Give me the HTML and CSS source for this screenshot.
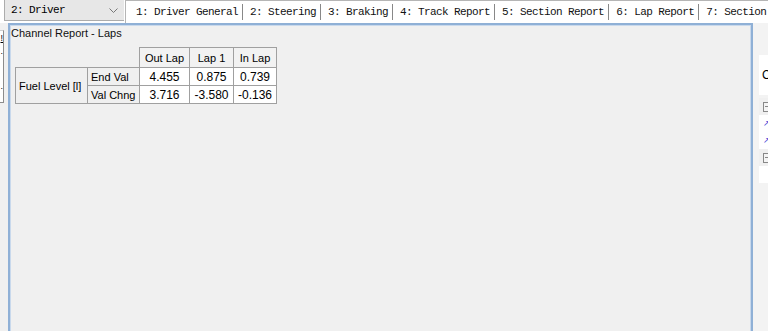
FILE: index.html
```html
<!DOCTYPE html>
<html lang="en">
<head>
    <meta charset="UTF-8">
    <title>Channel Report - Laps</title>
    <link rel="stylesheet" href="styles.css">
</head>
<body>
    <div class="topbar">
        <div class="edge"></div>
        <div class="combo">
            <span>2: Driver</span>
            <svg class="chevron" width="9" height="5" viewBox="0 0 9 5"><path d="M0.5 0.5 L4.5 4.5 L8.5 0.5" fill="none" stroke="#777" stroke-width="1"/></svg>
        </div>
        <div class="tabs">
            <span class="tab">1: Driver General</span>
            <span class="tab">2: Steering</span>
            <span class="tab">3: Braking</span>
            <span class="tab">4: Track Report</span>
            <span class="tab">5: Section Report</span>
            <span class="tab">6: Lap Report</span>
            <span class="tab">7: Section</span>
        </div>
    </div>

    <div class="main">
        <div class="side-left">
            <div class="stub">
                <span class="mark mark-bang">!</span>
                <span class="mark mark-dot1">.</span>
                <span class="mark mark-dot2">.</span>
            </div>
        </div>

        <div class="panel">
            <div class="panel-title">Channel Report - Laps</div>
            <table class="report">
                <colgroup>
                    <col class="c-name">
                    <col class="c-stat">
                    <col class="c-out">
                    <col class="c-lap">
                    <col class="c-in">
                </colgroup>
                <tr class="head-row">
                    <td class="blank" colspan="2"></td>
                    <th>Out Lap</th>
                    <th>Lap 1</th>
                    <th>In Lap</th>
                </tr>
                <tr>
                    <td class="channel" rowspan="2">Fuel Level [l]</td>
                    <td class="stat">End Val</td>
                    <td class="val">4.455</td>
                    <td class="val">0.875</td>
                    <td class="val">0.739</td>
                </tr>
                <tr>
                    <td class="stat">Val Chng</td>
                    <td class="val">3.716</td>
                    <td class="val">-3.580</td>
                    <td class="val">-0.136</td>
                </tr>
            </table>
        </div>

        <div class="side-right">
            <div class="peek-box"><span>C</span></div>
            <div class="tree">
                <div class="node"><span class="minus"></span></div>
                <div class="leaf"><span class="arrow">&#8599;</span></div>
                <div class="leaf"><span class="arrow">&#8599;</span></div>
                <div class="node"><span class="minus"></span></div>
                <div class="leaf"></div>
            </div>
        </div>
    </div>
</body>
</html>
```

FILE: styles.css
```css
:root {
    --panel: #f0f0f0;
    --line: #a0a0a0;
    --blue: #8fb0d6;
    --blue-light: #c9d9ec;
}

body {
    margin: 0;
    width: 768px;
    height: 331px;
    overflow: hidden;
    background: var(--panel);
    font-family: 'Liberation Sans', Arial, sans-serif;
    font-size: 11px;
    color: #000;
}

/* top row: combo + tab strip */
.topbar {
    display: flex;
    height: 23px;
    background: #fff;
}

.edge {
    width: 4px;
    flex-shrink: 0;
}

.combo {
    width: 120px;
    height: 21px;
    flex-shrink: 0;
    box-sizing: border-box;
    display: flex;
    align-items: center;
    justify-content: space-between;
    padding: 0 6px 0 6px;
    background: #e7e7e7;
    border-left: 1px solid #acacac;
    border-bottom: 1px solid #acacac;
    font-family: 'Liberation Mono', 'Courier New', monospace;
    font-size: 11px;
    letter-spacing: -0.6px;
}

.chevron {
    margin-top: 1px;
}

.tabs {
    flex: 1;
    display: flex;
    align-items: center;
    height: 22px;
    margin-left: 1px;
    padding-left: 10px;
    border-left: 1px solid #b5b5b5;
    border-top: 1px solid #b5b5b5;
    border-bottom: 1px solid #d8d8d8;
    white-space: nowrap;
    overflow: hidden;
    font-family: 'Liberation Mono', 'Courier New', monospace;
    font-size: 11px;
    letter-spacing: -0.6px;
    color: #111;
}

.tab {
    padding: 0 4px 0 7px;
    border-left: 1px solid #888;
    line-height: 16px;
}

.tab:first-child {
    padding-left: 0;
    border-left: none;
}

/* body row */
.main {
    display: flex;
    height: 308px;
}

.side-left {
    width: 8px;
    flex-shrink: 0;
    padding-top: 7px;
}

.stub {
    position: relative;
    width: 3px;
    height: 71px;
    background: #fff;
    border-right: 1px solid #8c8c8c;
    border-top: 1px solid #cfcfcf;
    border-bottom: 1px solid #8c8c8c;
    overflow: hidden;
}

.mark {
    position: absolute;
    right: 0;
    font-size: 9px;
    line-height: 7px;
}

.mark-bang { top: 4px; text-decoration: underline; }
.mark-dot1 { top: 17px; }
.mark-dot2 { top: 52px; }

.panel {
    width: 745px;
    flex-shrink: 0;
    box-sizing: border-box;
    border: 2px solid var(--blue);
    border-bottom: none;
    box-shadow: inset 1px 1px 0 var(--blue-light), inset -1px 0 0 var(--blue-light);
    background: var(--panel);
    padding: 2px 0 0 1px;
}

.panel-title {
    line-height: 13px;
    color: #111;
}

.report {
    margin: 7px 0 0 4px;
    border-collapse: collapse;
    table-layout: fixed;
}

.c-name { width: 72px; }
.c-stat { width: 52px; }
.c-out { width: 50px; }
.c-lap { width: 44px; }
.c-in { width: 43px; }

.report th,
.report td {
    border: 1px solid var(--line);
    padding: 0 3px;
    height: 17px;
    font-weight: normal;
    white-space: nowrap;
}

.head-row th,
.head-row td {
    height: 19px;
}

.report th {
    background: #f2f2f2;
    text-align: center;
}

.report td.blank {
    border: none;
    border-bottom: 1px solid var(--line);
    background: transparent;
}

.channel,
.stat {
    background: #f0f0f0;
    text-align: left;
}

.val {
    background: #fff;
    text-align: center;
    font-size: 12px;
}

/* right edge, cut-off neighbour pane */
.side-right {
    flex: 1;
    min-width: 0;
    overflow: hidden;
    padding-top: 32px;
    padding-left: 6px;
    background: #f3f3f3;
}

.peek-box {
    height: 40px;
    background: #fff;
    display: flex;
    align-items: center;
    padding-left: 3px;
    font-size: 12px;
}

.tree {
    margin-top: 3px;
}

.node,
.leaf {
    height: 17px;
    display: flex;
    align-items: center;
    padding-left: 4px;
    background: #fff;
}

.node {
    background: var(--panel);
}

.minus {
    width: 8px;
    height: 8px;
    flex-shrink: 0;
    border: 1px solid #888;
    background: linear-gradient(#888, #888) center / 6px 1px no-repeat, #f4f4f4;
}

.arrow {
    color: #3b3bd6;
    font-size: 8px;
    line-height: 8px;
}
```
